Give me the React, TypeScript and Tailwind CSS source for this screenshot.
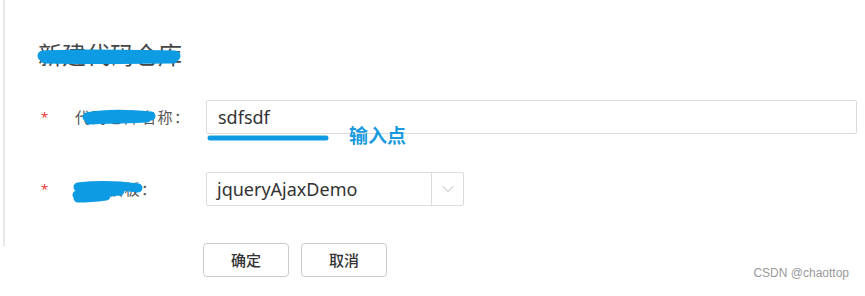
import { ChevronDown } from 'lucide-react'

const BLUE = '#0d9be3'

/**
 * Scribble - hand-drawn marker stroke laid over redacted text
 */
function Scribble({ d, width, height, stroke = 10, className }: { d: string; width: number; height: number; stroke?: number; className: string }) {
  return (
    <svg
      className={`pointer-events-none absolute ${className}`}
      width={width}
      height={height}
      viewBox={`0 0 ${width} ${height}`}
      fill="none"
    >
      <path d={d} stroke={BLUE} strokeWidth={stroke} strokeLinecap="round" strokeLinejoin="round" />
    </svg>
  )
}

function Required() {
  return <span className="w-[37px] pl-[3px] text-[13px] leading-none text-[#e53935]">*</span>
}

export default function App() {
  return (
    <div className="relative h-[296px] w-[865px] overflow-hidden bg-white font-['Noto_Sans','Noto_Sans_CJK_SC',sans-serif] text-[#333]">
      <div className="ml-[3px] h-[246px] border-l-2 border-[#e8e8e8] pl-[33px] pt-[38px]">
        {/* title */}
        <div className="relative h-[34px] w-fit text-[24px] leading-[34px] text-[#444]">
          新建代码仓库
          <Scribble
            className="left-[-1px] top-[10px]"
            width={144}
            height={18}
            stroke={11}
            d="M6 8 C40 6 90 7 138 8 M8 10 C60 11 110 10 136 10"
          />
        </div>

        {/* repo name */}
        <div className="mt-[28px] flex h-[34px] items-center">
          <Required />
          <label className="relative w-[131px] text-[15px] tracking-[1.5px] text-[#555]">
            代码仓库名称：
            <Scribble
              className="left-[6px] top-[1px]"
              width={76}
              height={20}
              stroke={9}
              d="M6 10 C25 6 50 7 70 9 M8 13 C30 12 50 12 66 11"
            />
          </label>
          <div className="relative">
            <input
              readOnly
              value="sdfsdf"
              className="h-[34px] w-[651px] rounded-[2px] border border-[#dcdcdc] px-[11px] text-[18px] text-[#333] outline-none"
            />
            <Scribble className="left-[0px] top-[33px]" width={124} height={10} stroke={5} d="M4 5 L120 5" />
            <span className="absolute left-[143px] top-[22px] text-[19px] font-bold text-[#1a9be0]">输入点</span>
          </div>
        </div>

        {/* template */}
        <div className="mt-[38px] flex h-[34px] items-center">
          <Required />
          <label className="relative w-[131px] text-[15px] tracking-[1.5px] text-[#555]">
            代码模板：
            <Scribble
              className="left-[-3px] top-[0px]"
              width={72}
              height={26}
              stroke={9}
              d="M6 9 C24 7 44 7 66 10 M5 17 C20 15 36 14 48 13 M6 20 C14 20 26 19 34 18"
            />
          </label>
          <div className="flex h-[34px] w-[258px] items-stretch rounded-[2px] border border-[#dcdcdc]">
            <span className="flex flex-1 items-center px-[10px] text-[18px] text-[#333]">jqueryAjaxDemo</span>
            <span className="flex w-[32px] items-center justify-center border-l border-[#dcdcdc] text-[#aaa]">
              <ChevronDown size={20} strokeWidth={1} />
            </span>
          </div>
        </div>

        {/* actions */}
        <div className="mt-[37px] flex gap-[12px] pl-[165px]">
          <button className="h-[34px] w-[86px] rounded-[4px] border border-[#cccccc] bg-white text-[15px] font-medium text-[#333]">
            确定
          </button>
          <button className="h-[34px] w-[86px] rounded-[4px] border border-[#cccccc] bg-white text-[15px] font-medium text-[#333]">
            取消
          </button>
        </div>
      </div>

      <span className="absolute right-[16px] top-[264px] font-['Liberation_Sans',sans-serif] text-[12px] text-[#999]">
        CSDN @chaottop
      </span>
    </div>
  )
}
